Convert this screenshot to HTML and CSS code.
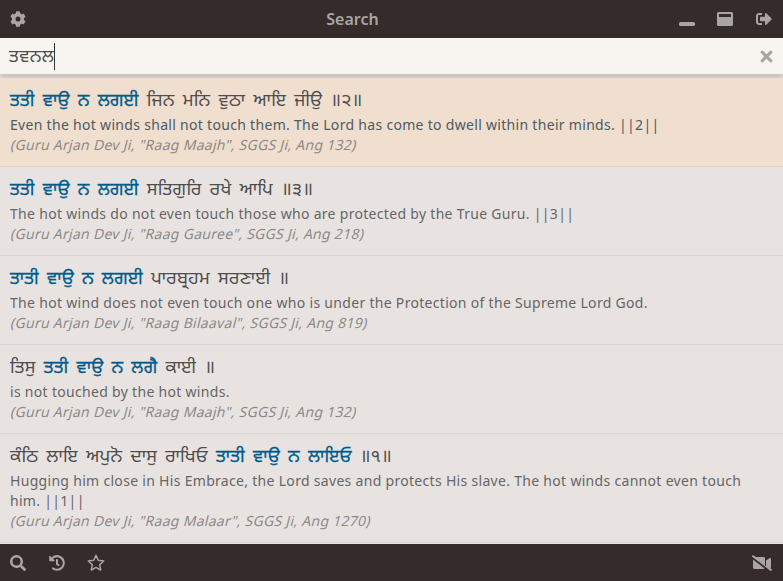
FILE: index.html
```html
<!DOCTYPE html>
<html lang="en">
<head>
<meta charset="utf-8">
<title>Search</title>
<link rel="stylesheet" href="styles.css">
</head>
<body>
<header class="bar top">
  <svg class="icon" viewBox="0 0 512 512"><path fill-rule="evenodd" d="M487 316l-43-25c4-23 4-47 0-70l43-25c5-3 7-9 6-14-11-36-30-69-55-96-4-4-10-5-15-2l-43 25c-18-16-39-28-61-36V24c0-6-4-11-10-12-36-8-74-8-110 0-6 1-9 6-9 12v50c-23 8-43 20-61 35L86 84c-5-3-11-2-15 2-25 27-44 60-55 96-1 5 1 11 6 14l43 25c-4 23-4 47 0 70l-43 25c-5 3-8 9-6 14 11 36 30 69 55 96 4 4 10 5 15 2l43-25c18 16 39 28 61 36v50c0 5 4 10 9 12 36 8 74 8 110 0 6-2 10-7 10-12v-50c22-8 43-20 61-36l43 25c5 3 11 2 15-2 25-27 44-60 55-96 1-5-1-11-6-14zM256 336a80 80 0 1 1 0-160 80 80 0 0 1 0 160z"/></svg>
  <h1 class="title">Search</h1>
  <svg class="icon minimize" viewBox="0 0 512 512"><rect y="352" width="512" height="128" rx="48"/></svg>
  <svg class="icon window" viewBox="0 0 512 512"><path fill-rule="evenodd" d="M48 32h416a48 48 0 0 1 48 48v352a48 48 0 0 1-48 48H48a48 48 0 0 1-48-48V80a48 48 0 0 1 48-48zm16 64v96h384V96z"/></svg>
  <svg class="icon" viewBox="0 0 512 512"><path d="M497 273L329 441c-15 15-41 4-41-17v-96H152c-13 0-24-11-24-24v-96c0-13 11-24 24-24h136V88c0-21 26-32 41-17l168 168c9 9 9 25 0 34zM192 436v-40c0-7-5-12-12-12H96c-18 0-32-14-32-32V160c0-18 14-32 32-32h84c7 0 12-5 12-12V76c0-7-5-12-12-12H96c-53 0-96 43-96 96v192c0 53 43 96 96 96h84c7 0 12-5 12-12z"/></svg>
</header>
<div class="search">
  <span class="query" lang="pa">ਤਵਨਲ</span><span class="caret"></span>
  <svg class="clear" viewBox="0 0 12 12"><path d="M2 2l8 8M10 2l-8 8"/></svg>
</div>
<main class="results">
  <article class="result active">
    <p class="line" lang="pa"><b>ਤਤੀ ਵਾਉ ਨ ਲਗਈ</b> ਜਿਨ ਮਨਿ ਵੁਠਾ ਆਇ ਜੀਉ ॥੨॥</p>
    <p class="translation">Even the hot winds shall not touch them. The Lord has come to dwell within their minds. ||2||</p>
    <p class="source">(Guru Arjan Dev Ji, "Raag Maajh", SGGS Ji, Ang 132)</p>
  </article>
  <article class="result">
    <p class="line" lang="pa"><b>ਤਤੀ ਵਾਉ ਨ ਲਗਈ</b> ਸਤਿਗੁਰਿ ਰਖੇ ਆਪਿ ॥੩॥</p>
    <p class="translation">The hot winds do not even touch those who are protected by the True Guru. ||3||</p>
    <p class="source">(Guru Arjan Dev Ji, "Raag Gauree", SGGS Ji, Ang 218)</p>
  </article>
  <article class="result">
    <p class="line" lang="pa"><b>ਤਾਤੀ ਵਾਉ ਨ ਲਗਈ</b> ਪਾਰਬ੍ਰਹਮ ਸਰਣਾਈ ॥</p>
    <p class="translation">The hot wind does not even touch one who is under the Protection of the Supreme Lord God.</p>
    <p class="source">(Guru Arjan Dev Ji, "Raag Bilaaval", SGGS Ji, Ang 819)</p>
  </article>
  <article class="result">
    <p class="line" lang="pa">ਤਿਸੁ <b>ਤਤੀ ਵਾਉ ਨ ਲਗੈ</b> ਕਾਈ ॥</p>
    <p class="translation">is not touched by the hot winds.</p>
    <p class="source">(Guru Arjan Dev Ji, "Raag Maajh", SGGS Ji, Ang 132)</p>
  </article>
  <article class="result">
    <p class="line" lang="pa">ਕੰਠਿ ਲਾਇ ਅਪੁਨੋ ਦਾਸੁ ਰਾਖਿਓ <b>ਤਾਤੀ ਵਾਉ ਨ ਲਾਇਓ</b> ॥੧॥</p>
    <p class="translation">Hugging him close in His Embrace, the Lord saves and protects His slave. The hot winds cannot even touch him. ||1||</p>
    <p class="source">(Guru Arjan Dev Ji, "Raag Malaar", SGGS Ji, Ang 1270)</p>
  </article>
</main>
<footer class="bar bottom">
  <svg class="icon" viewBox="0 0 512 512"><path fill-rule="evenodd" d="M505 443L405 343c-4-4-11-7-17-7h-16a208 208 0 1 0-36 36v16c0 6 3 13 7 17l100 100c9 9 24 9 34 0l28-28c9-10 9-25 0-34zM208 336a128 128 0 1 1 0-256 128 128 0 0 1 0 256z"/></svg>
  <svg class="icon" viewBox="0 0 512 512"><path d="M504 255C504 392 393 504 256 504c-59 0-113-21-156-55-11-9-12-26-2-36l11-11c9-9 22-10 32-2a184 184 0 1 0-11-278l51 51c10 10 3 27-11 27H24c-9 0-16-7-16-16V38c0-14 17-21 27-11l49 49A248 248 0 0 1 504 255zM323 352l10-13c8-10 6-25-4-33l-41-33V152c0-13-11-24-24-24h-16c-13 0-24 11-24 24v152l66 51c10 8 25 7 33-3z"/></svg>
  <svg class="icon star" viewBox="0 0 18 18"><path d="M9 1.4l2.3 4.9 5.4.7-4 3.7 1 5.3L9 13.4 4.300 16l1-5.300-4-3.700 5.400-.7z"/></svg>
  <svg class="icon video" viewBox="0 0 640 512"><path d="M634 458l-55-43c15-1 29-13 29-31V128c0-26-29-41-50-26l-110 75v184l-32-25V112c0-26-22-48-48-48H124L46 4C39-2 29 0 23 6L3 31c-5 7-4 17 3 23l588 454c7 5 17 4 22-3l20-25c6-7 4-17-2-22zM32 400c0 26 22 48 48 48h288c14 0 26-6 34-15L32 147z"/></svg>
</footer>
</body>
</html>
```
FILE: styles.css
```css
* { box-sizing: border-box; }
body {
  margin: 0;
  height: 581px;
  overflow: hidden;
  display: flex;
  flex-direction: column;
  background: #e8e3e1;
  color: #4d4d4d;
  font-family: "Noto Sans", sans-serif;
}
p, h1 { margin: 0; }
.bar {
  display: flex;
  align-items: center;
  flex: none;
  padding: 0 11px 0 10px;
  background: #352b2b;
  color: #a9a5a2;
}
.top { height: 38px; gap: 22px; }
.window { margin-right: 1px; }
.bottom { height: 37px; gap: 22.5px; }
.icon { width: 16px; height: 16px; fill: currentColor; flex: none; }
.title { flex: 1; text-align: center; font-size: 16px; line-height: 24px; font-weight: 600; }
.star { width: 18px; height: 18px; fill: none; stroke: currentColor; stroke-width: 1.5; stroke-linejoin: round; }
.video { width: 20px; margin-left: auto; }
.search {
  display: flex;
  align-items: center;
  flex: none;
  height: 36px;
  padding: 0 10px 0 9px;
  background: #f6f5f0;
  box-shadow: 0 5px 5px #c8c4c1;
}
.query { font-family: "Noto Sans Gurmukhi", "Noto Sans", sans-serif; font-size: 18px; line-height: 28px; padding-top: 3px; letter-spacing: 0.4px; }
.caret { width: 1px; height: 27px; background: #333; }
.clear { width: 13px; height: 13px; margin-left: auto; fill: none; stroke: #a9a5a2; stroke-width: 2.800; stroke-linecap: round; }
.results { flex: 1; min-height: 0; padding-top: 4px; }
.result { padding: 10px 10px 11px; border-bottom: 1px solid #dad6d4; position: relative; background: #e8e3e1; }
.active { background: #f0dece; }
.line { font-family: "Noto Sans Gurmukhi", "Noto Sans", sans-serif; font-size: 18px; line-height: 27px; letter-spacing: 0.3px; word-spacing: 3px; white-space: nowrap; }
.line b { color: #005b8c; font-weight: 400; -webkit-text-stroke: 0.3px; }
.translation, .source { font-size: 14px; line-height: 20px; letter-spacing: 0.305px; }
.translation { color: #666; }
.source { color: #8c8a89; letter-spacing: 0.28px; transform: skewX(-14deg); transform-origin: 0 15px; }
.active .translation { color: #4c5b64; }
```
